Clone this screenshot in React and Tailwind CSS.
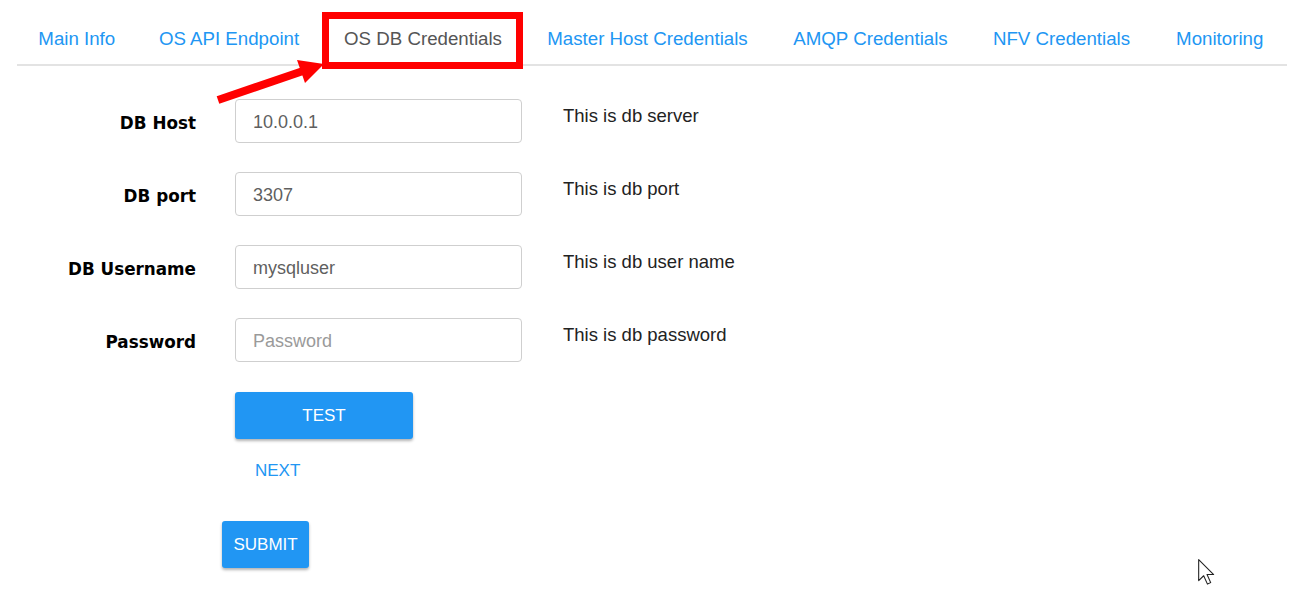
import { useState } from 'react';

const tabs = [
  { name: 'Main Info', w: 'w-[119.5px]' },
  { name: 'OS API Endpoint', w: 'w-[185px]' },
  { name: 'OS DB Credentials', w: 'w-[203px]', active: true },
  { name: 'Master Host Credentials', w: 'w-[246px]' },
  { name: 'AMQP Credentials', w: 'w-[200px]' },
  { name: 'NFV Credentials', w: 'w-[182px]' },
  { name: 'Monitoring', w: 'w-[134.5px]' },
];

const fields = [
  { label: 'DB Host', value: '10.0.0.1', help: 'This is db server' },
  { label: 'DB port', value: '3307', help: 'This is db port' },
  { label: 'DB Username', value: 'mysqluser', help: 'This is db user name' },
  { label: 'Password', value: '', placeholder: 'Password', help: 'This is db password', type: 'password' },
];

export default function App() {
  const [values, setValues] = useState(fields.map(f => f.value));

  return (
    <div className="relative w-[1295px] h-[593px] bg-white overflow-hidden font-['Liberation_Sans',Arial,sans-serif]">
      {/* Tabs */}
      <div className="ml-[17px] w-[1270px] flex border-b-2 border-[#e3e3e3]">
        {tabs.map(t => (
          <div
            key={t.name}
            className={`relative ${t.w} h-[64px] pt-[14px] flex items-center justify-center whitespace-nowrap text-[18.7px] ${t.active ? 'text-[#555555]' : 'text-[#2196f3]'}`}
          >
            {t.name}
            {t.active && (
              <div className="absolute top-[12px] left-[0.5px] w-[201px] h-[57px] border-[7px] border-[#ff0000]" />
            )}
          </div>
        ))}
      </div>

      {/* Form */}
      <div className="mt-[33px] flex flex-col gap-[29px]">
        {fields.map((f, i) => (
          <div key={f.label} className="flex items-start">
            <div className="w-[196px] h-[44px] flex items-center justify-end pt-[5px] font-['DejaVu_Sans',Verdana,sans-serif] font-bold text-[16.8px] text-black">
              {f.label}
            </div>
            <input
              type={f.type || 'text'}
              value={values[i]}
              placeholder={f.placeholder}
              onChange={e => setValues(v => v.map((x, j) => (j === i ? e.target.value : x)))}
              className="ml-[39px] w-[287px] h-[44px] px-[17px] pt-[2px] rounded-[4px] border border-[#cfcfcf] text-[18px] text-[#5f5f5f] placeholder:text-[#9a9a9a] outline-none"
            />
            <div className="ml-[41px] pt-[6px] leading-[22px] text-[18.5px] text-[#222222]">{f.help}</div>
          </div>
        ))}
      </div>

      <div className="ml-[235px] mt-[30px] flex flex-col items-start">
        <button className="w-[178px] h-[47px] pt-[1px] rounded-[3px] bg-[#2196f3] text-white text-[17px] shadow-[0_2px_3px_rgba(0,0,0,0.3)]">
          TEST
        </button>
        <button className="mt-[13px] h-[36px] pt-[2px] px-[20px] text-[#2196f3] text-[17px]">NEXT</button>
      </div>

      <div className="ml-[222px] mt-[33px]">
        <button className="h-[47px] pt-[1px] px-[11.5px] rounded-[3px] bg-[#2196f3] text-white text-[17px] shadow-[0_2px_3px_rgba(0,0,0,0.3)]">
          SUBMIT
        </button>
      </div>

      {/* annotation arrow and mouse pointer */}
      <svg className="absolute left-0 top-0 pointer-events-none" width="1295" height="593" viewBox="0 0 1295 593">
        <line x1="218" y1="100" x2="303" y2="71" stroke="#ff0000" strokeWidth="8" />
        <polygon points="324,64 297,60 305,83" fill="#ff0000" />
        <g transform="translate(1198 559) scale(1.35)">
          <path d="M0.5 0.5 L0.5 16 L4.2 12.4 L7 18.6 L9.4 17.5 L6.7 11.5 L11.6 11.5 Z" fill="#ffffff" stroke="#222222" strokeWidth="0.8" strokeLinejoin="round" />
        </g>
      </svg>
    </div>
  );
}
